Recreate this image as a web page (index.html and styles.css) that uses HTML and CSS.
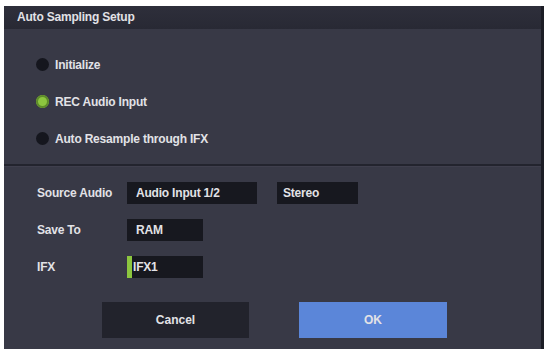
FILE: index.html
```html
<!DOCTYPE html>
<html>
<head>
<meta charset="utf-8">
<link rel="stylesheet" href="styles.css">
</head>
<body>
<div class="dialog">
  <div class="titlebar">Auto Sampling Setup</div>
  <div class="radios">
    <div class="radio"><span class="dot"></span><span>Initialize</span></div>
    <div class="radio"><span class="dot on"></span><span>REC Audio Input</span></div>
    <div class="radio"><span class="dot"></span><span>Auto Resample through IFX</span></div>
  </div>
  <div class="form">
    <div class="row">
      <span class="label">Source Audio</span>
      <span class="field wide">Audio Input 1/2</span>
      <span class="field mid">Stereo</span>
    </div>
    <div class="row">
      <span class="label">Save To</span>
      <span class="field">RAM</span>
    </div>
    <div class="row">
      <span class="label">IFX</span>
      <span class="field marked"><span class="mark"></span>IFX1</span>
    </div>
    <div class="buttons">
      <div class="btn cancel">Cancel</div>
      <div class="btn ok">OK</div>
    </div>
  </div>
</div>
</body>
</html>
```
FILE: styles.css
```css
html, body {
  margin: 0;
  padding: 0;
  background: #ffffff;
}
body {
  font-family: "Liberation Sans", Arial, sans-serif;
  font-weight: bold;
  font-size: 12px;
  color: #e2e2e6;
}
.dialog {
  margin: 6px 2px 0 4px;
  width: 537px;
  height: 343px;
  background: #383946;
  border-right: 3px solid #1c1d25;
  display: flex;
  flex-direction: column;
}
.titlebar {
  height: 23px;
  line-height: 23px;
  padding-left: 13px;
  background: linear-gradient(#2e2f3b, #282934);
  letter-spacing: -0.2px;
}
.radios {
  padding: 17px 0 7px 32px;
  border-bottom: 2px solid #23242e;
  box-shadow: 0 1px 0 #44455391;
}
.radio {
  height: 37px;
  display: flex;
  align-items: center;
  gap: 6px;
  letter-spacing: -0.2px;
}
.dot {
  width: 13px;
  height: 13px;
  border-radius: 50%;
  background: #15161e;
  flex: none;
}
.dot.on {
  background: #8cc63f;
  box-shadow: inset 0 0 0 2px #5e8c2a;
}
.form {
  padding: 16px 0 0 33px;
  display: flex;
  flex-direction: column;
  gap: 15px;
}
.row {
  display: flex;
  align-items: center;
  height: 22px;
}
.label {
  width: 90px;
  letter-spacing: -0.2px;
}
.field {
  width: 67px;
  height: 22px;
  padding-left: 9px;
  background: #17181f;
  display: flex;
  align-items: center;
  letter-spacing: -0.2px;
}
.field.wide {
  width: 121px;
  margin-right: 20px;
}
.field.mid {
  width: 75px;
  padding-left: 6px;
}
.field.marked {
  width: 76px;
  padding-left: 0;
}
.mark {
  width: 5px;
  height: 22px;
  background: #8cc63f;
  margin-right: 1px;
}
.buttons {
  display: flex;
  gap: 50px;
  margin-top: 9px;
  padding-left: 65px;
}
.btn {
  height: 36px;
  line-height: 36px;
  text-align: center;
  width: 147px;
}
.cancel {
  background: #22232c;
}
.ok {
  width: 148px;
  background: #5b86d9;
}
```
